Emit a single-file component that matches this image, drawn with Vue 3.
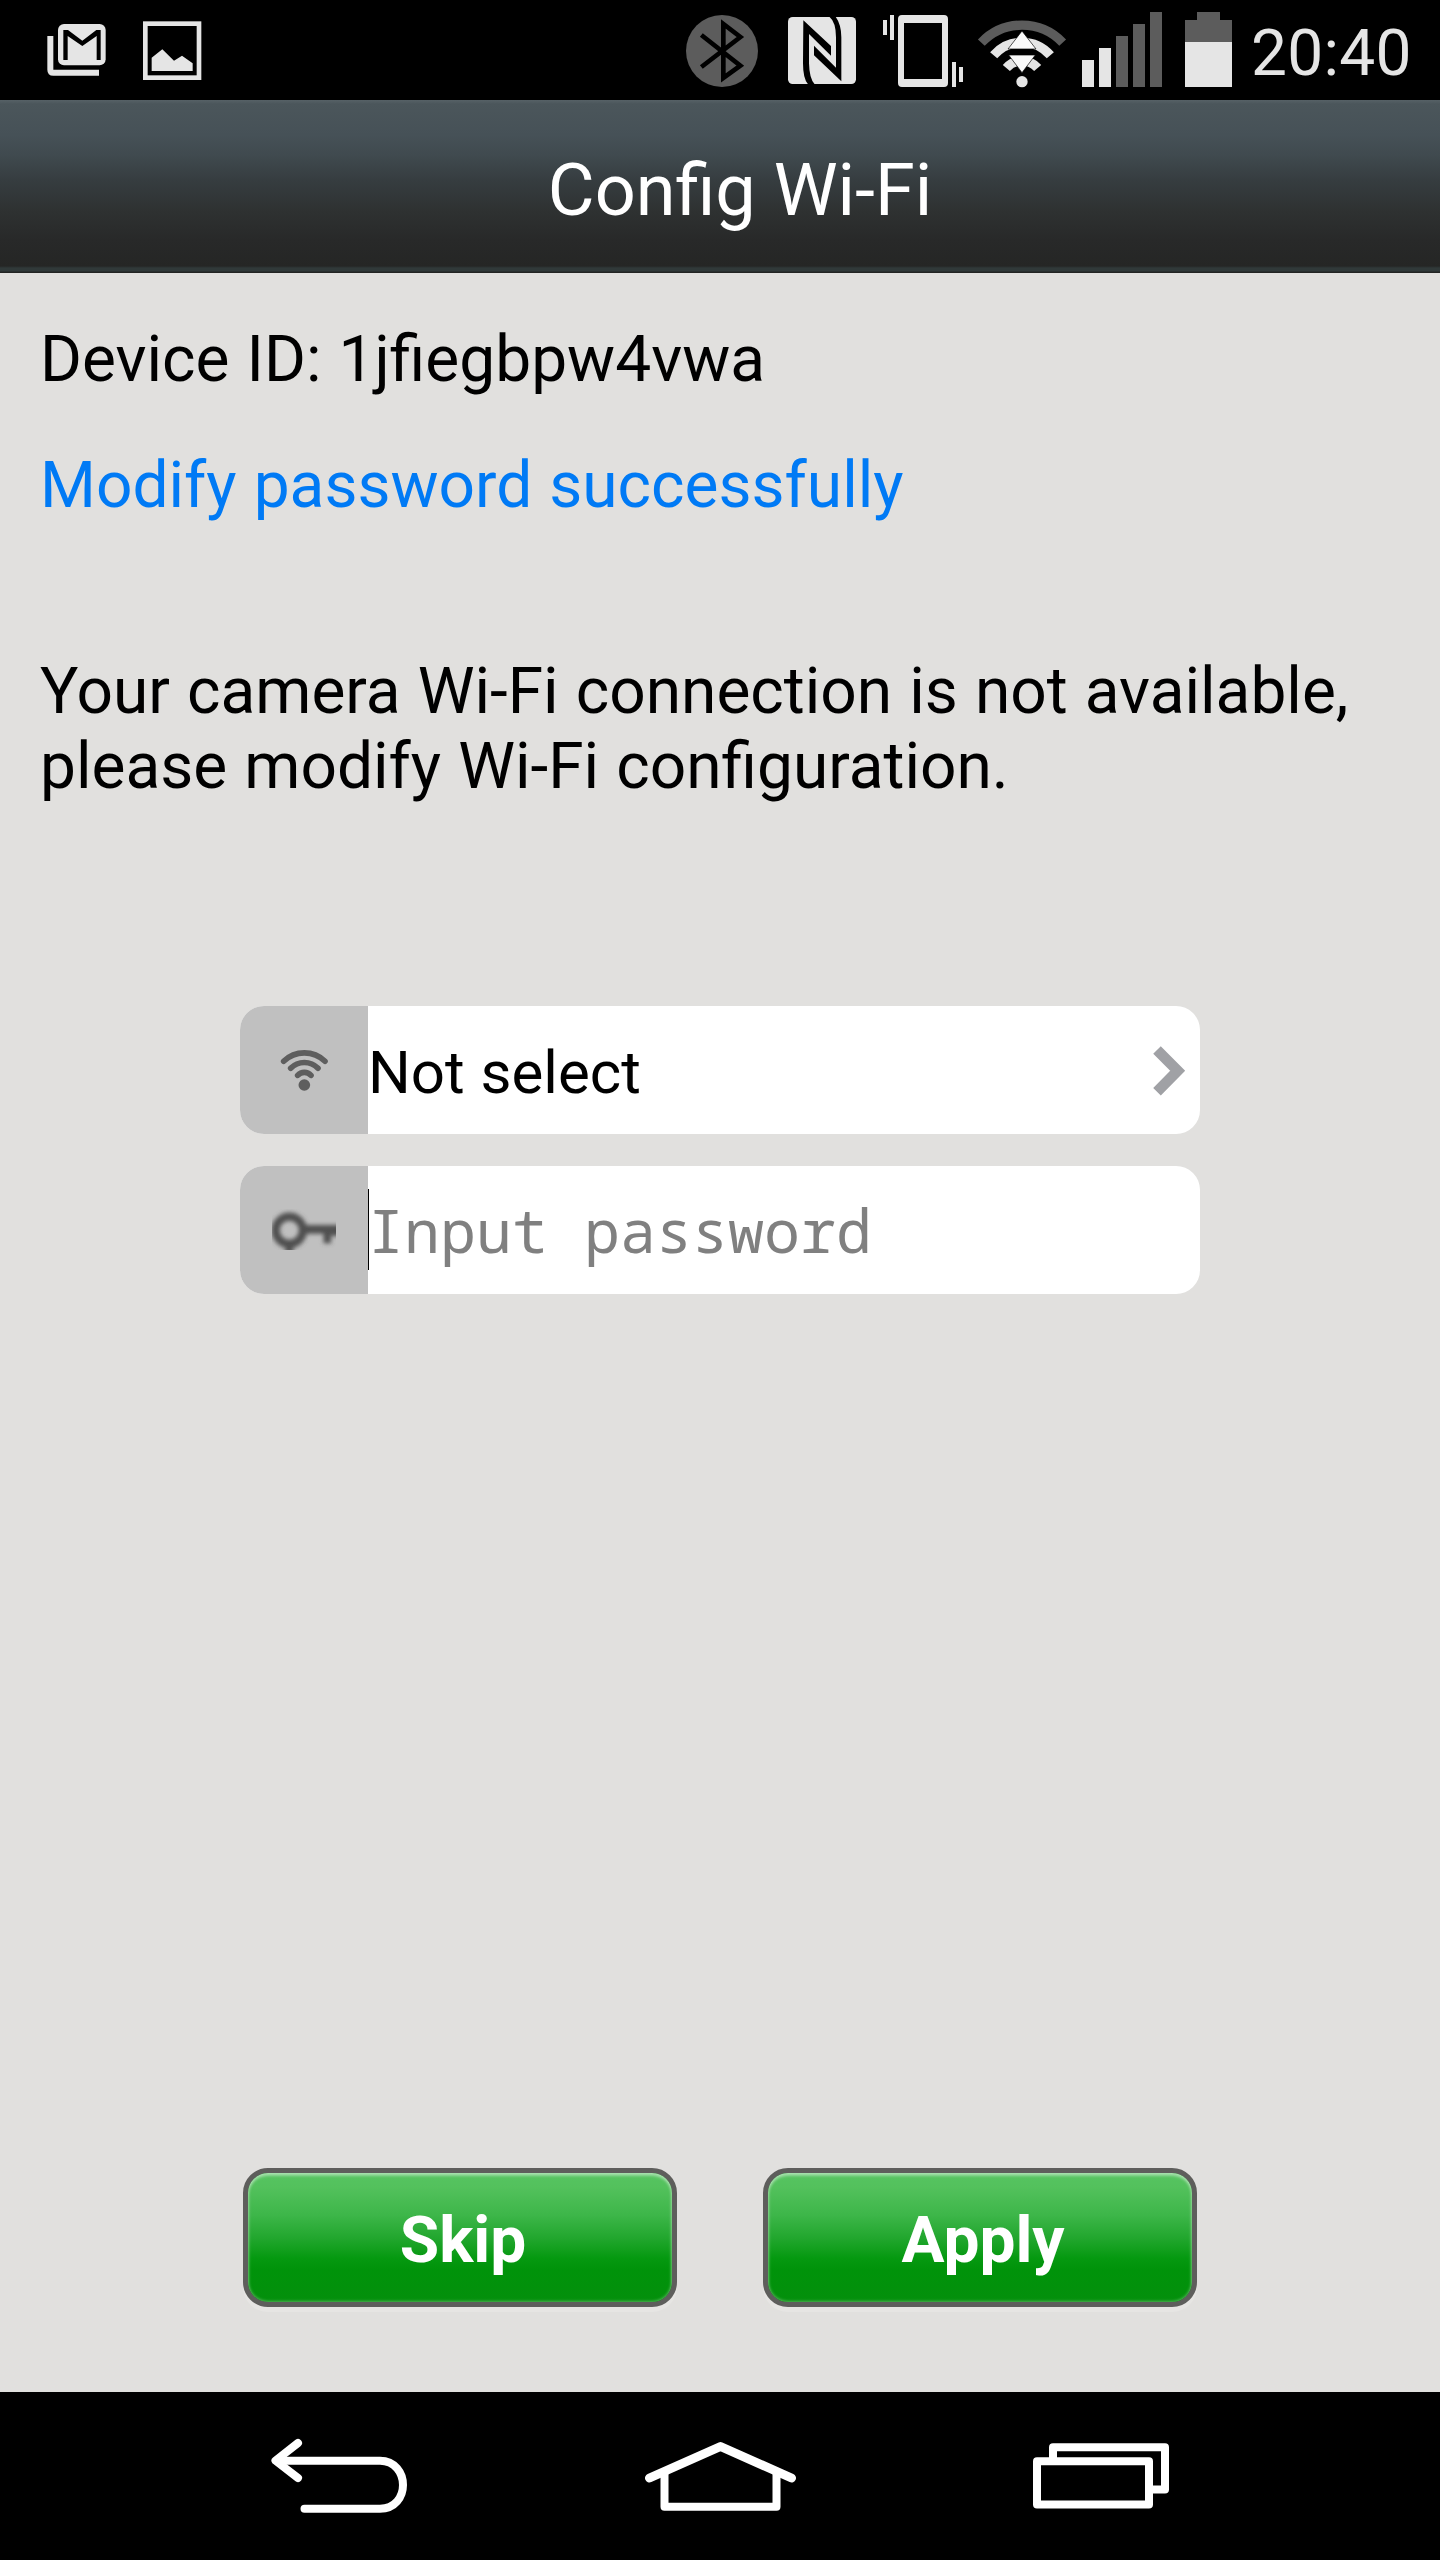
<template>
  <div class="screen">
    <div class="status-bar">
      <div class="status-left">
        <svg width="120" height="100" viewBox="0 0 360 300">
          <path d="M142 108H160V209H297V227H160Q142 227 142 209Z" fill="#e5e5e5" />
          <rect x="174" y="72" width="143" height="124" rx="18" fill="#e5e5e5" />
          <path
            d="M190 180V90H204L247 122L289 90H302V180H290V108L247 138L203 108V180Z"
            fill="#000"
          />
        </svg>
        <svg width="100" height="100" viewBox="360 0 300 300">
          <rect x="436" y="71" width="161" height="162" fill="none" stroke="#e5e5e5" stroke-width="14" />
          <path d="M455 213V173L487 148L522 182L546 167L578 190V213Z" fill="#e5e5e5" />
        </svg>
      </div>

      <div class="status-right">
        <!-- bluetooth -->
        <svg width="102" height="100" viewBox="0 0 306 300">
          <circle cx="156" cy="153" r="108" fill="#5c5c5c" />
          <path
            d="M94 105L211 197L160 234V72L211 111L94 201"
            fill="none"
            stroke="#000"
            stroke-width="14"
          />
        </svg>
        <!-- nfc -->
        <svg width="100" height="100" viewBox="306 0 300 300">
          <rect x="354" y="51" width="204" height="201" rx="14" fill="#e5e5e5" />
          <path
            d="M400 61L483 138V167L417 102V190Q418 236 434 253H414Q399 236 399 190Z"
            fill="#000"
          />
          <path
            d="M478 50H497Q514 74 514 112V244L432 166V137L498 203V112Q498 66 478 50Z"
            fill="#000"
          />
        </svg>
        <!-- vibrate -->
        <svg width="100" height="100" viewBox="606 0 300 300">
          <path
            d="M696 45H822Q834 45 834 57V249Q834 261 822 261H696Q684 261 684 249V57Q684 45 696 45ZM702 69V237H816V69Z"
            fill="#e5e5e5"
            fill-rule="evenodd"
          />
          <path
            d="M639 60H651V105H639ZM660 45H672V120H660ZM846 186H858V261H846ZM867 201H879V246H867Z"
            fill="#e5e5e5"
          />
        </svg>
        <!-- wifi -->
        <svg width="98" height="100" viewBox="906 0 294 300">
          <g fill="none" stroke-width="28">
            <path d="M934 128A168 168 0 0 1 1178 128" stroke="#5c5c5c" />
            <path d="M971 166A112 112 0 0 1 1141 166" stroke="#e5e5e5" />
            <path d="M1009 204A62 62 0 0 1 1103 204" stroke="#e5e5e5" />
          </g>
          <circle cx="1056" cy="245" r="17" fill="#e5e5e5" />
          <path
            d="M1056 93L1098 147H1014ZM1016 165H1096L1056 218Z"
            fill="#fafafa"
            stroke="#000"
            stroke-width="2"
          />
        </svg>
        <!-- signal -->
        <svg width="100" height="100" viewBox="30 0 300 300">
          <rect
            v-for="bar in signalBars"
            :key="bar.x"
            :x="bar.x"
            :y="bar.y"
            width="36"
            :height="261 - bar.y"
            :fill="bar.on ? '#e5e5e5' : '#5c5c5c'"
          />
        </svg>
        <!-- battery -->
        <svg width="75" height="100" viewBox="330 0 225 300">
          <path d="M375 60H411V36H480V60H516V126H375Z" fill="#5c5c5c" />
          <path d="M375 126H516V261H375Z" fill="#e5e5e5" />
        </svg>
        <span class="clock">20:40</span>
      </div>
    </div>

    <header class="header">
      <h1 class="title">Config Wi-Fi</h1>
    </header>

    <main class="content">
      <p class="text">Device ID: {{ deviceId }}</p>
      <p class="text success">Modify password successfully</p>
      <p class="text notice">
        Your camera Wi-Fi connection is not available, please modify Wi-Fi configuration.
      </p>

      <form class="form" @submit.prevent>
        <div class="field">
          <svg class="field-icon" viewBox="60 48 384 384">
            <g fill="none" stroke="#5e5e5e" stroke-width="17" stroke-linecap="round">
              <path d="M191 214A89 89 0 0 1 315 214" />
              <path d="M212 235A57 57 0 0 1 294 235" />
              <path d="M233 256A27 27 0 0 1 273 256" />
            </g>
            <circle cx="253" cy="285" r="17.500" fill="#5e5e5e" />
          </svg>
          <span class="network">{{ network }}</span>
          <svg class="arrow" viewBox="150 48 150 384">
            <path d="M171 180L233 242L171 305" fill="none" stroke="#a0a1a5" stroke-width="32" />
          </svg>
        </div>

        <div class="field">
          <svg class="field-icon" viewBox="60 528 384 384">
            <defs>
              <filter id="soft" x="-20%" y="-20%" width="140%" height="140%">
                <feGaussianBlur stdDeviation="6.5" />
              </filter>
              <clipPath id="key-box">
                <rect x="156" y="657" width="192" height="123" />
              </clipPath>
            </defs>
            <g clip-path="url(#key-box)">
              <g filter="url(#soft)" fill="none" stroke="#505050">
                <circle cx="208" cy="721" r="41" stroke-width="25" />
                <path d="M252 718H370" stroke-width="26" />
                <path d="M322 722V760M346 722V738M208 766V790" stroke-width="23" />
              </g>
            </g>
          </svg>
          <span class="caret"></span>
          <input v-model="password" class="input" type="text" placeholder="Input password" />
        </div>
      </form>

      <div class="actions">
        <button class="button">Skip</button>
        <button class="button">Apply</button>
      </div>
    </main>

    <nav class="nav-bar">
      <svg width="160" height="168" viewBox="260 2392 160 168">
        <g fill="none" stroke="#fff" stroke-width="8" stroke-linecap="round" stroke-linejoin="round">
          <path d="M298 2443L275.500 2460.700L298 2478" />
          <path d="M277 2460.700H380C395 2460.700 403 2473 403 2485S395 2508.700 380 2508.700H304.500" />
        </g>
      </svg>
      <svg width="160" height="168" viewBox="640 2392 160 168">
        <g fill="none" stroke="#fff" stroke-width="8" stroke-linecap="round" stroke-linejoin="round">
          <path d="M649.500 2478L720.500 2446.500L791.500 2478" stroke-width="9" />
          <path d="M664.500 2474V2506.700H776.500V2474" />
        </g>
      </svg>
      <svg width="160" height="168" viewBox="1020 2392 160 168">
        <g stroke="#fff" stroke-width="8" stroke-linejoin="round">
          <rect x="1053" y="2447.300" width="112" height="42.300" fill="none" />
          <rect x="1037" y="2461.300" width="112" height="43.200" fill="#000" />
        </g>
      </svg>
    </nav>
  </div>
</template>

<script setup>
import { ref } from "vue";

const deviceId = ref("1jfiegbpw4vwa");
const network = ref("Not select");
const password = ref("");

// Signal strength: two bars of five
const signalBars = [
  { x: 66, y: 180, on: true },
  { x: 117, y: 144, on: true },
  { x: 168, y: 108, on: false },
  { x: 219, y: 72, on: false },
  { x: 270, y: 36, on: false },
];
</script>

<style>
body {
  margin: 0;
  background: #000;
}
</style>

<style scoped>
.screen {
  width: 1440px;
  height: 2560px;
  display: flex;
  flex-direction: column;
  background: #e1e0de;
  font-family: Roboto, sans-serif;
  color: #000;
  overflow: hidden;
}

svg {
  display: block;
  flex-shrink: 0;
}

.status-bar {
  height: 100px;
  display: flex;
  justify-content: space-between;
  background: #000;
}

.status-left {
  display: flex;
}

.status-right {
  width: 770px;
  display: flex;
}

.clock {
  padding: 16px 0 0 6px;
  font-size: 64px;
  line-height: 75px;
  letter-spacing: 0.3px;
  color: #e5e5e5;
}

.header {
  height: 173px;
  box-sizing: border-box;
  padding: 49px 0 0 40px;
  background: linear-gradient(
    #566166 0,
    #4b565b 4px,
    #465157 35px,
    #404a4f 55px,
    #363d40 80px,
    #2e3131 112px,
    #282929 140px,
    #252625 166px,
    #303939 168px,
    #303939 171px,
    #222423 172px
  );
}

.title {
  margin: 0;
  font-size: 72px;
  line-height: 84px;
  font-weight: 400;
  text-align: center;
  color: #fff;
}

.content {
  flex: 1;
  display: flex;
  flex-direction: column;
  padding: 49px 40px 85px;
}

.text {
  margin: 0;
  font-size: 64px;
  line-height: 75px;
  word-spacing: 1.2px;
}

.success {
  margin-top: 51px;
  color: #007af5;
}

.notice {
  margin-top: 131px;
}

.form {
  display: flex;
  flex-direction: column;
  gap: 32px;
  width: 960px;
  margin: 202px auto 0;
}

.field {
  height: 128px;
  display: flex;
  align-items: center;
  background: #fff;
  border-radius: 24px;
  overflow: hidden;
}

.field-icon {
  width: 128px;
  height: 128px;
  background: #c0c0c0;
}

.network {
  flex: 1;
  padding-top: 6px;
  font-size: 60px;
  line-height: 70px;
  word-spacing: 1px;
}

.arrow {
  width: 50px;
  height: 128px;
}

.caret {
  width: 1px;
  height: 81px;
  margin: 0 -1px 2px 0;
  background: #000;
}

.input {
  flex: 1;
  min-width: 0;
  height: 128px;
  box-sizing: border-box;
  padding: 0;
  border: none;
  outline: none;
  background: transparent;
  font-family: "Droid Sans Mono", "Noto Sans Mono", "DejaVu Sans Mono", monospace;
  font-size: 60px;
}

.input::placeholder {
  color: #808080;
  opacity: 1;
}

.actions {
  display: flex;
  justify-content: center;
  gap: 86px;
  margin-top: auto;
}

.button {
  width: 434px;
  height: 139px;
  padding: 5px 0 0 6px;
  border: 5px solid #5e5e5c;
  border-radius: 25px;
  background: linear-gradient(
    #57c564 0,
    #53c15c 14%,
    #3db649 34%,
    #1fa52b 52%,
    #059910 65%,
    #00930a 73%,
    #048f0c 100%
  );
  background-origin: border-box;
  box-shadow:
    0 5px 0 #e6e5e3,
    inset 0 0 3px 1px rgba(255, 255, 255, 0.3),
    inset 0 3px 3px rgba(255, 255, 255, 0.35);
  font-family: Roboto, sans-serif;
  font-size: 64px;
  line-height: 75px;
  font-weight: 700;
  color: #fff;
}

.nav-bar {
  height: 168px;
  display: flex;
  justify-content: center;
  gap: 220px;
  background: #000;
}
</style>
